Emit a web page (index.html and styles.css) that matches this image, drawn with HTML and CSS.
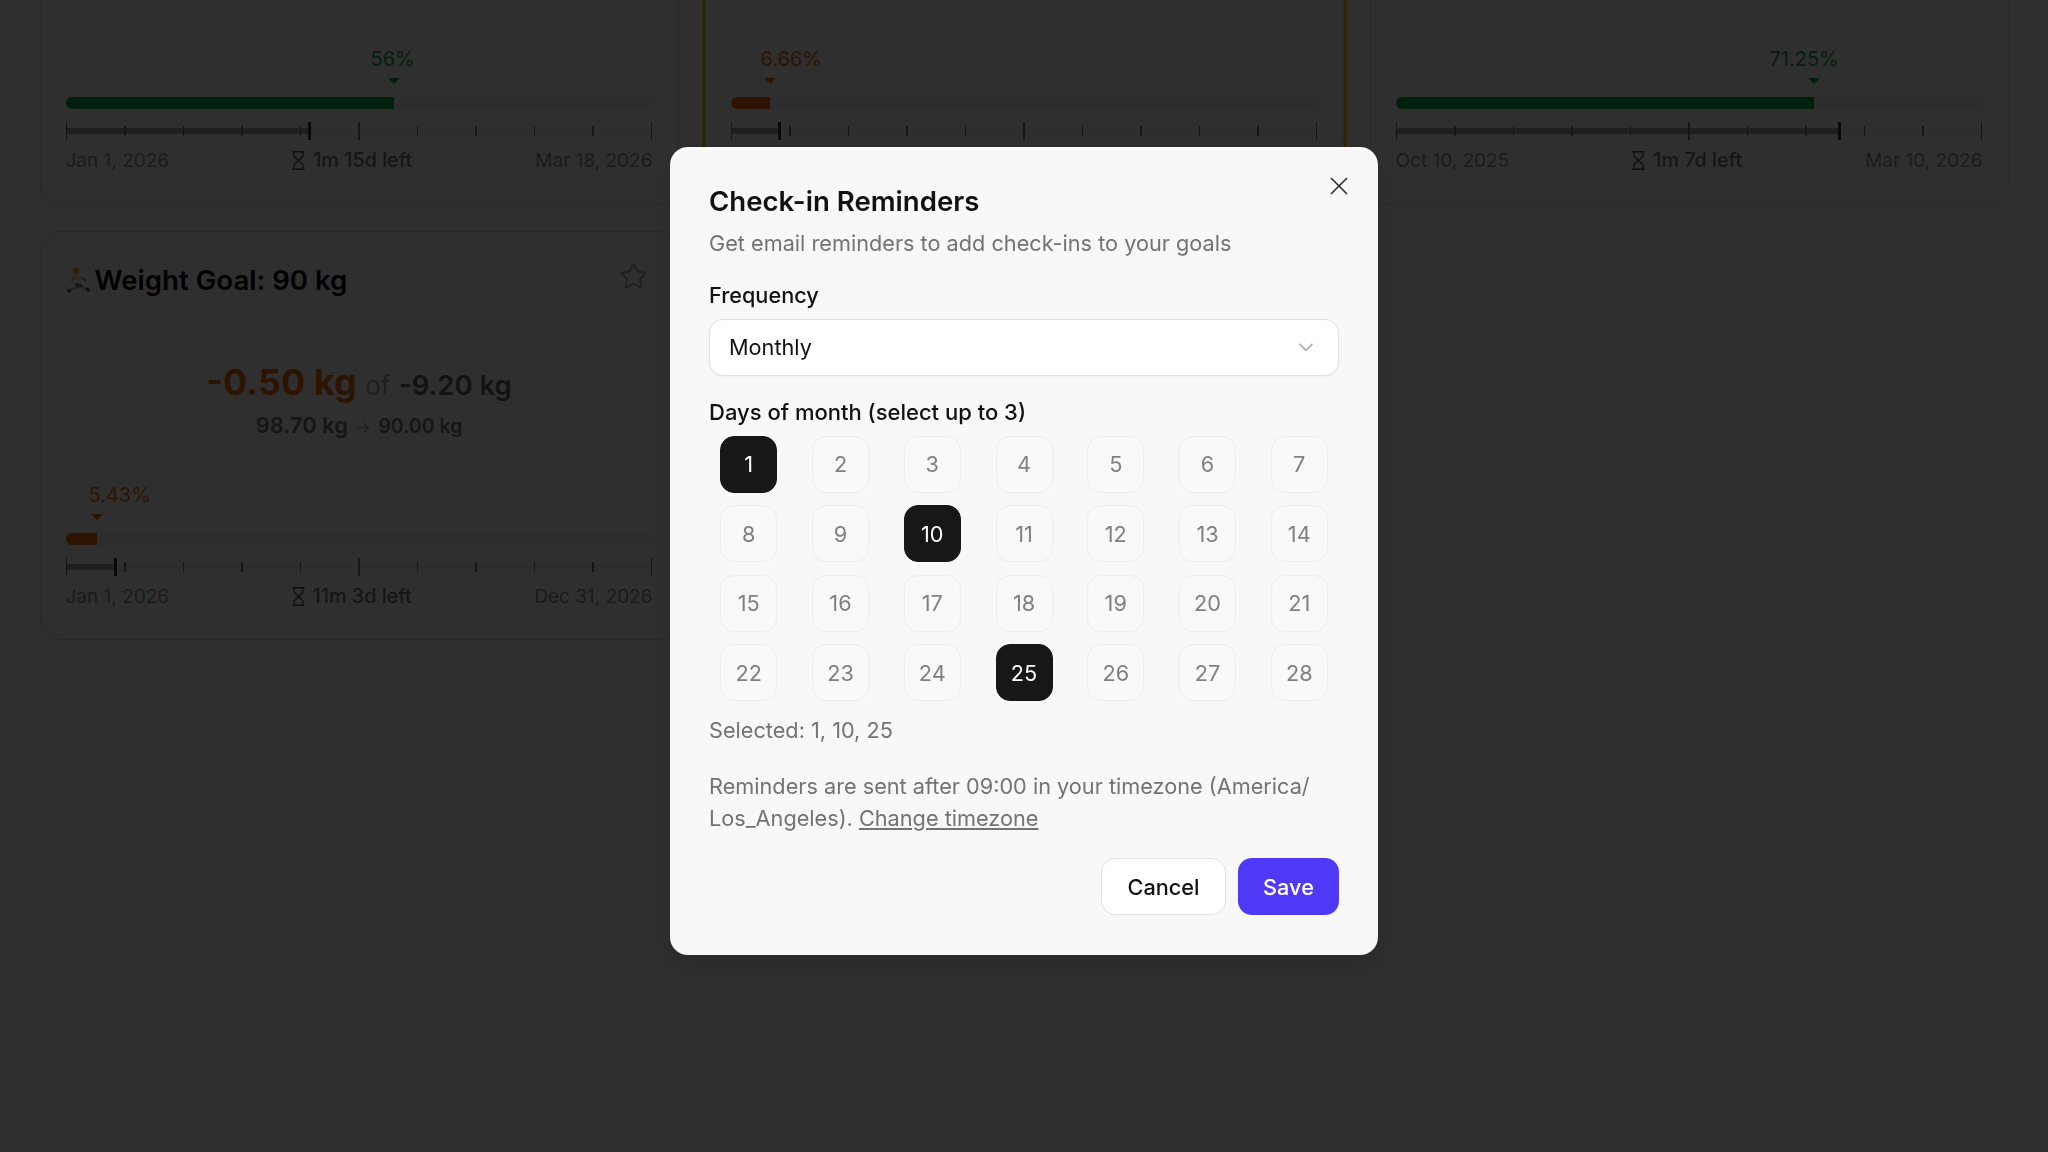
FILE: index.html
```html
<!DOCTYPE html>
<html>

<head>
    <meta charset="utf-8">
    <title>Goals</title>
    <link rel="stylesheet" href="styles.css">
</head>

<body>
    <svg class="defs">
        <symbol id="hourglass" viewBox="0 0 24 24">
            <path d="M5 22h14M5 2h14M17 22v-4.172a2 2 0 0 0-.586-1.414L12 12l-4.414 4.414A2 2 0 0 0 7 17.828V22M7 2v4.172a2 2 0 0 0 .586 1.414L12 12l4.414-4.414A2 2 0 0 0 17 6.172V2" />
        </symbol>
    </svg>

    <main class="goals">
        <section class="card">
            <div class="gauge">
                <div class="pct-row good"><span class="pct" style="left: 305px">56%</span></div>
                <div class="bar good"><div class="fill" style="width: 56%"><i class="arrow"></i></div></div>
                <div class="timeline">
                    <div class="elapsed" style="width: 41.5%"></div>
                    <div class="ticks"><i class="major"></i><i></i><i></i><i></i><i></i><i class="major"></i><i></i><i></i><i></i><i></i><i class="major"></i></div>
                </div>
                <div class="dates">
                    <span>Jan 1, 2026</span>
                    <span class="left"><svg class="glass"><use href="#hourglass" /></svg>1m 15d left</span>
                    <span>Mar 18, 2026</span>
                </div>
            </div>
        </section>

        <section class="card starred">
            <div class="gauge">
                <div class="pct-row bad"><span class="pct" style="left: 30px">6.66%</span></div>
                <div class="bar bad"><div class="fill" style="width: 6.66%"><i class="arrow"></i></div></div>
                <div class="timeline">
                    <div class="elapsed" style="width: 8.3%"></div>
                    <div class="ticks"><i class="major"></i><i></i><i></i><i></i><i></i><i class="major"></i><i></i><i></i><i></i><i></i><i class="major"></i></div>
                </div>
                <div class="dates">
                    <span>&nbsp;</span>
                </div>
            </div>
        </section>

        <section class="card">
            <div class="gauge">
                <div class="pct-row good"><span class="pct" style="left: 374px">71.25%</span></div>
                <div class="bar good"><div class="fill" style="width: 71.25%"><i class="arrow"></i></div></div>
                <div class="timeline">
                    <div class="elapsed" style="width: 75.6%"></div>
                    <div class="ticks"><i class="major"></i><i></i><i></i><i></i><i></i><i class="major"></i><i></i><i></i><i></i><i></i><i class="major"></i></div>
                </div>
                <div class="dates">
                    <span>Oct 10, 2025</span>
                    <span class="left"><svg class="glass"><use href="#hourglass" /></svg>1m 7d left</span>
                    <span>Mar 10, 2026</span>
                </div>
            </div>
        </section>

        <section class="card">
            <header class="card-head">
                <h2 class="card-title">
                    <svg class="runner" viewBox="0 0 26 26">
                        <circle cx="10" cy="4" r="3.2" fill="#e0a63a" />
                        <path d="M8 8l6 1 3 6-2 3-6-1z" fill="#ececec" />
                        <path d="M9 16l6 1 1 3-6 1z" fill="#777" />
                        <path d="M9 9l-4 5M15 10l5 4" stroke="#e0a63a" stroke-width="2.2" fill="none" />
                        <path d="M10 20l-4 2-3 1M16 19l3 3 2 0" stroke="#e0a63a" stroke-width="2.4" fill="none" />
                        <path d="M1 23l4 1.5M21 21l2 3.5" stroke="#3b4aa8" stroke-width="2.6" fill="none" />
                    </svg>
                    Weight Goal: 90 kg
                </h2>
                <svg class="star" viewBox="0 0 24 24">
                    <path d="M11.525 2.295a.53.53 0 0 1 .95 0l2.31 4.679a2.123 2.123 0 0 0 1.595 1.16l5.166.756a.53.53 0 0 1 .294.904l-3.736 3.638a2.123 2.123 0 0 0-.611 1.878l.882 5.14a.53.53 0 0 1-.771.56l-4.618-2.428a2.122 2.122 0 0 0-1.973 0L6.396 21.01a.53.53 0 0 1-.77-.56l.881-5.139a2.122 2.122 0 0 0-.611-1.879L2.16 9.795a.53.53 0 0 1 .294-.906l5.165-.755a2.122 2.122 0 0 0 1.597-1.16z" />
                </svg>
            </header>
            <div class="stat">
                <div class="stat-main"><span class="stat-now">-0.50 kg</span> <span class="stat-of">of</span> <span class="stat-total">-9.20 kg</span></div>
                <div class="stat-sub">98.70 kg <span class="stat-arrow">→</span> <span class="stat-target">90.00 kg</span></div>
            </div>
            <div class="gauge">
                <div class="pct-row bad"><span class="pct" style="left: 23px">5.43%</span></div>
                <div class="bar bad"><div class="fill" style="width: 5.43%"><i class="arrow"></i></div></div>
                <div class="timeline">
                    <div class="elapsed" style="width: 8.6%"></div>
                    <div class="ticks"><i class="major"></i><i></i><i></i><i></i><i></i><i class="major"></i><i></i><i></i><i></i><i></i><i class="major"></i></div>
                </div>
                <div class="dates">
                    <span>Jan 1, 2026</span>
                    <span class="left"><svg class="glass"><use href="#hourglass" /></svg>11m 3d left</span>
                    <span>Dec 31, 2026</span>
                </div>
            </div>
        </section>
    </main>

    <div class="overlay">
        <div class="modal">
            <button class="close">
                <svg viewBox="0 0 24 24"><path d="M18 6 6 18M6 6l12 12" /></svg>
            </button>
            <h1 class="modal-title">Check-in Reminders</h1>
            <p class="modal-sub">Get email reminders to add check-ins to your goals</p>

            <label class="field-label">Frequency</label>
            <div class="select">
                <span>Monthly</span>
                <svg viewBox="0 0 24 24"><path d="m6 9 6 6 6-6" /></svg>
            </div>

            <label class="field-label days-label">Days of month (select up to 3)</label>
            <div class="days">
                <button class="day on">1</button>
                <button class="day">2</button>
                <button class="day">3</button>
                <button class="day">4</button>
                <button class="day">5</button>
                <button class="day">6</button>
                <button class="day">7</button>
                <button class="day">8</button>
                <button class="day">9</button>
                <button class="day on">10</button>
                <button class="day">11</button>
                <button class="day">12</button>
                <button class="day">13</button>
                <button class="day">14</button>
                <button class="day">15</button>
                <button class="day">16</button>
                <button class="day">17</button>
                <button class="day">18</button>
                <button class="day">19</button>
                <button class="day">20</button>
                <button class="day">21</button>
                <button class="day">22</button>
                <button class="day">23</button>
                <button class="day">24</button>
                <button class="day on">25</button>
                <button class="day">26</button>
                <button class="day">27</button>
                <button class="day">28</button>
            </div>

            <p class="selected">Selected: 1, 10, 25</p>
            <p class="note">Reminders are sent after 09:00 in your timezone (America/<br>Los_Angeles). <a href="#">Change timezone</a></p>

            <div class="actions">
                <button class="btn cancel">Cancel</button>
                <button class="btn save">Save</button>
            </div>
        </div>
    </div>
</body>

</html>
```

FILE: styles.css
```css
* {
    margin: 0;
    box-sizing: border-box;
}

html,
body {
    height: 100%;
    overflow: hidden;
}

body {
    background: #fafafa;
    font-family: Inter, "Liberation Sans", sans-serif;
    color: #111;
}

.defs {
    display: none;
}

/* page behind the dialog, scrolled down a bit */
.goals {
    display: grid;
    grid-template-columns: repeat(3, 639px);
    column-gap: 26px;
    row-gap: 27px;
    margin-top: -205px;
    padding-left: 39.5px;
}

.card {
    display: flex;
    flex-direction: column;
    height: 409px;
    padding: 0 25px;
    background: #fafafa;
    border: 1px solid #d9d9d9;
    border-radius: 20px;
}

.card.starred {
    box-shadow: 0 0 0 3px #f5b83a;
}

.card-head {
    display: flex;
    justify-content: space-between;
    padding-top: 30px;
}

.card-title {
    display: flex;
    align-items: center;
    height: 36px;
    font-size: 27.6px;
    font-weight: 600;
    color: #000;
}

.runner {
    width: 26px;
    height: 26px;
    margin-right: 3px;
}

.star {
    width: 29px;
    height: 29px;
    margin: 0 5px 0 0;
    fill: none;
    stroke: #a3a3a3;
    stroke-width: 1.6;
}

.stat {
    margin-top: 61px;
    text-align: center;
}

.stat-main {
    height: 46px;
    line-height: 46px;
}

.stat-now {
    font-size: 36px;
    font-weight: 700;
    color: #f06a00;
}

.stat-of {
    margin: 0 4px;
    font-size: 26px;
    color: #a3a3a3;
}

.stat-total {
    font-size: 27.5px;
    font-weight: 600;
    color: #666;
}

.stat-sub {
    margin-top: 7px;
    font-size: 22px;
    font-weight: 600;
    color: #737373;
}

.stat-arrow {
    margin: 0 2px;
    font-size: 16px;
    font-weight: 400;
    color: #a3a3a3;
}

.stat-target {
    font-size: 19.5px;
}

.gauge {
    margin-top: auto;
    padding-bottom: 31px;
}

.pct-row {
    position: relative;
    height: 47px;
}

.pct {
    position: absolute;
    top: -3px;
    font-size: 20px;
    line-height: 24px;
}

.good .pct {
    color: #16a34a;
}

.bad .pct {
    color: #f06a00;
}

.bar {
    height: 12px;
    background: #f0f0f0;
    border-radius: 6px;
}

.fill {
    position: relative;
    height: 100%;
    border-radius: 6px 0 0 6px;
}

.good .fill {
    background: #0aa548;
}

.bad .fill {
    background: #f06a00;
}

.arrow {
    position: absolute;
    right: -6px;
    top: -19px;
    border-left: 6px solid transparent;
    border-right: 6px solid transparent;
    border-top: 6px solid #16a34a;
}

.bad .arrow {
    border-top-color: #f06a00;
}

.timeline {
    position: relative;
    height: 18px;
    margin-top: 13px;
}

.timeline::before {
    content: "";
    position: absolute;
    left: 0;
    right: 0;
    top: 6px;
    height: 6px;
    background: #ececec;
}

.elapsed {
    position: absolute;
    left: 0;
    top: 6px;
    height: 6px;
    background: #a3a3a3;
}

.elapsed::after {
    content: "";
    position: absolute;
    right: -1.5px;
    top: -6px;
    width: 3px;
    height: 18px;
    background: #333;
}

.ticks {
    position: relative;
    display: flex;
    justify-content: space-between;
    align-items: center;
    height: 18px;
}

.ticks i {
    width: 1.5px;
    height: 10px;
    background: #737373;
}

.ticks i.major {
    height: 18px;
}

.dates {
    display: flex;
    justify-content: space-between;
    align-items: center;
    height: 24px;
    margin-top: 8px;
    font-size: 19px;
    color: #8f8f8f;
}

.left {
    display: flex;
    align-items: center;
    gap: 7px;
    font-size: 19.8px;
    font-weight: 500;
    color: #737373;
}

.glass {
    width: 21px;
    height: 21px;
    fill: none;
    stroke: #525252;
    stroke-width: 1.6;
    margin-left: -4px;
    margin-right: -3px;
}

/* dialog */
.overlay {
    position: fixed;
    inset: 0;
    display: flex;
    justify-content: center;
    align-items: flex-start;
    padding-top: 147px;
    background: rgba(0, 0, 0, 0.81);
}

.modal {
    position: relative;
    width: 708px;
    height: 808px;
    padding: 37px 39px 0;
    background: #f8f8f8;
    border-radius: 18px;
    box-shadow: 0 10px 30px rgba(0, 0, 0, 0.15);
}

.close {
    position: absolute;
    top: 17px;
    right: 17px;
    width: 44px;
    height: 44px;
    padding: 6px;
    background: none;
    border: 0;
}

.close svg {
    display: block;
    fill: none;
    stroke: #333;
    stroke-width: 1.3;
}

.modal-title {
    font-size: 27.6px;
    line-height: 34px;
    font-weight: 600;
    color: #111;
}

.modal-sub {
    margin-top: 9px;
    font-size: 21.7px;
    line-height: 32px;
    color: #737373;
}

.field-label {
    display: block;
    margin-top: 22px;
    font-size: 21.7px;
    line-height: 29px;
    font-weight: 500;
    color: #111;
}

.days-label {
    margin-top: 22px;
    font-size: 22px;
}

.select {
    display: flex;
    justify-content: space-between;
    align-items: center;
    height: 57px;
    margin-top: 9px;
    padding: 0 19px 2px;
    background: #fff;
    border: 1.5px solid #e0e0e0;
    border-radius: 14px;
    box-shadow: 0 1px 2px rgba(0, 0, 0, 0.05);
    font-size: 21.7px;
}

.select svg {
    width: 26px;
    height: 26px;
    fill: none;
    stroke: #a8a8a8;
    stroke-width: 1.5;
}

.days {
    display: grid;
    grid-template-columns: repeat(7, 1fr);
    justify-items: center;
    gap: 12.5px 12.25px;
    margin-top: 8.5px;
}

.day {
    width: 57px;
    height: 57px;
    padding: 0;
    background: #f9f9f9;
    border: 1.5px solid #ededed;
    border-radius: 14px;
    font: inherit;
    font-size: 21.7px;
    color: #808080;
}

.day.on {
    background: #171717;
    border-color: #171717;
    color: #fff;
}

.selected {
    margin-top: 12.5px;
    font-size: 21.7px;
    line-height: 32px;
    color: #737373;
}

.note {
    margin-top: 24.5px;
    font-size: 21.7px;
    line-height: 32px;
    color: #737373;
}

.note a {
    color: #737373;
}

.actions {
    display: flex;
    justify-content: flex-end;
    gap: 12px;
    margin-top: 24px;
}

.btn {
    height: 57px;
    border-radius: 14px;
    font: inherit;
    font-size: 21.7px;
    font-weight: 500;
}

.cancel {
    width: 125px;
    background: #fff;
    border: 1.5px solid #e0e0e0;
    color: #111;
}

.save {
    width: 101px;
    background: #4f39f6;
    border: 0;
    color: #fff;
}
```
